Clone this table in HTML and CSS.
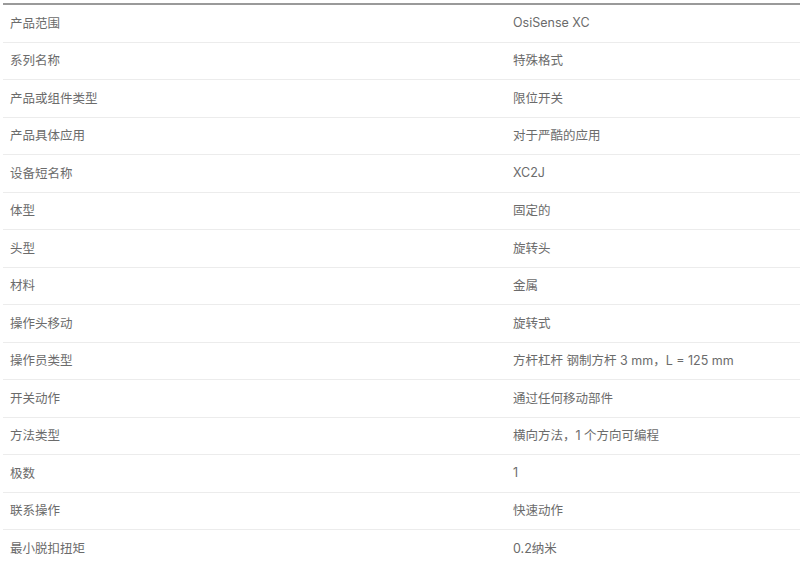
FILE: index.html
```html
<!DOCTYPE html>
<html lang="zh">
<head>
<meta charset="utf-8">
<link rel="stylesheet" href="styles.css">
</head>
<body>
<div class="specs">
  <div class="row"><div class="k">产品范围</div><div class="v">OsiSense XC</div></div>
  <div class="row"><div class="k">系列名称</div><div class="v">特殊格式</div></div>
  <div class="row"><div class="k">产品或组件类型</div><div class="v">限位开关</div></div>
  <div class="row"><div class="k">产品具体应用</div><div class="v">对于严酷的应用</div></div>
  <div class="row"><div class="k">设备短名称</div><div class="v">XC2J</div></div>
  <div class="row"><div class="k">体型</div><div class="v">固定的</div></div>
  <div class="row"><div class="k">头型</div><div class="v">旋转头</div></div>
  <div class="row"><div class="k">材料</div><div class="v">金属</div></div>
  <div class="row"><div class="k">操作头移动</div><div class="v">旋转式</div></div>
  <div class="row"><div class="k">操作员类型</div><div class="v">方杆杠杆 钢制方杆 3 mm，L = 125 mm</div></div>
  <div class="row"><div class="k">开关动作</div><div class="v">通过任何移动部件</div></div>
  <div class="row"><div class="k">方法类型</div><div class="v">横向方法，1 个方向可编程</div></div>
  <div class="row"><div class="k">极数</div><div class="v">1</div></div>
  <div class="row"><div class="k">联系操作</div><div class="v">快速动作</div></div>
  <div class="row"><div class="k">最小脱扣扭矩</div><div class="v">0.2纳米</div></div>
</div>
</body>
</html>
```
FILE: styles.css
```css
html, body {
  margin: 0;
  padding: 0;
  background: #fff;
}
body {
  padding: 3px 0 0 3px;
  font-family: "Inter", "Noto Sans CJK SC", sans-serif;
  font-size: 12.5px;
  color: #6b6b6b;
}
.specs {
  border-top: 2px solid #9a9a9a;
}
.row {
  display: grid;
  grid-template-columns: 500px 1fr;
  height: 37.5px;
  box-sizing: border-box;
  border-bottom: 1px solid #ececec;
  align-items: center;
  padding-bottom: 2px;
}
.k {
  padding-left: 7px;
}
.v {
  padding-left: 10px;
}
```
